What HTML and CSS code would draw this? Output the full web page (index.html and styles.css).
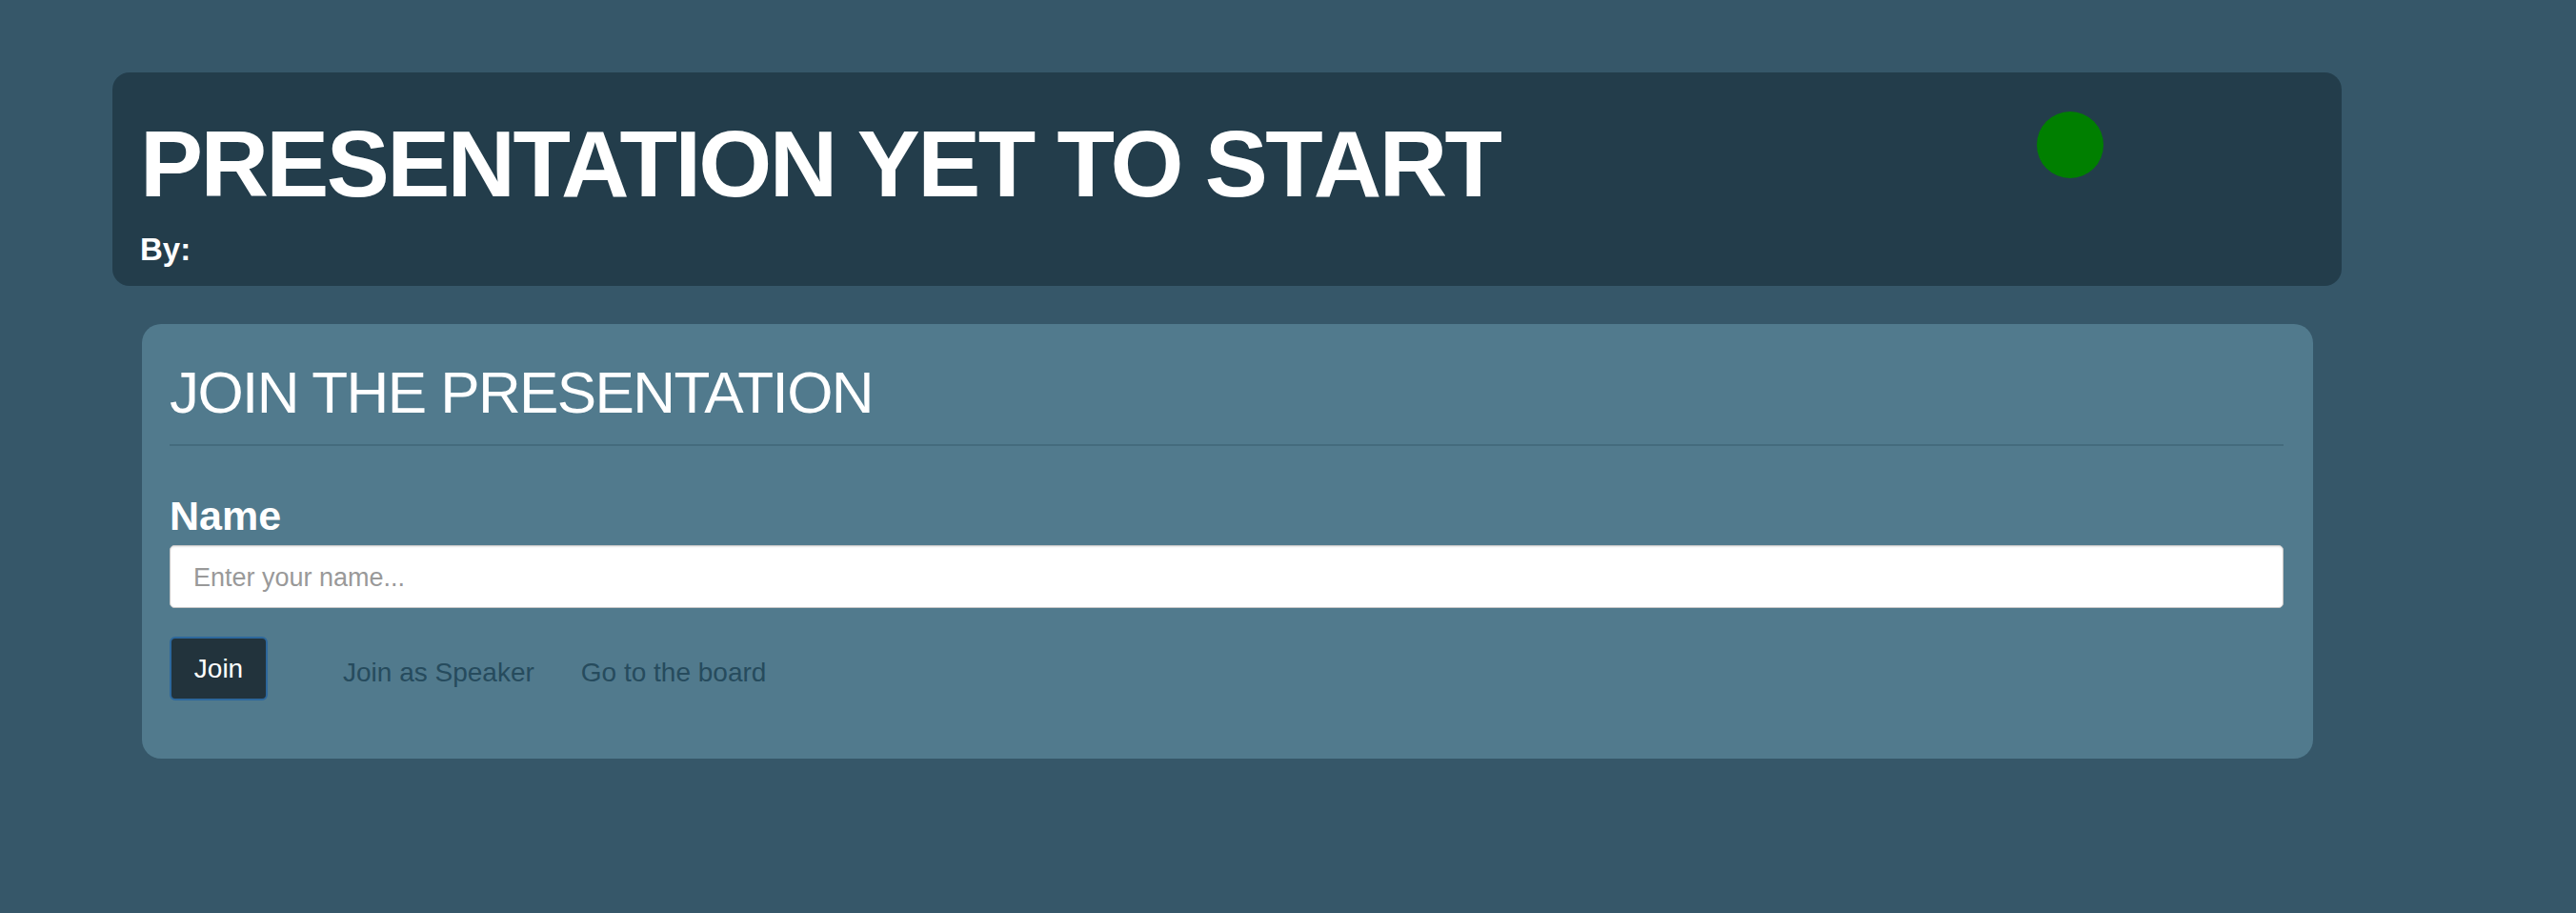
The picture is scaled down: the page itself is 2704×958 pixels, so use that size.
FILE: index.html
```html
<!DOCTYPE html>
<html lang="en">
<head>
<meta charset="utf-8">
<title>Presentation</title>
<link rel="stylesheet" href="styles.css">
</head>
<body>
  <header class="header">
    <div class="header-text">
      <h1 class="title">PRESENTATION YET TO START</h1>
      <div class="byline">By:</div>
    </div>
    <span class="status-dot" aria-label="online"></span>
  </header>

  <section class="card">
    <h2 class="card-title">JOIN THE PRESENTATION</h2>
    <form class="join-form">
      <label class="label" for="name">Name</label>
      <input class="input" id="name" type="text" placeholder="Enter your name...">
      <div class="actions">
        <button class="btn" type="button">Join</button>
        <a class="link link-first" href="#">Join as Speaker</a>
        <a class="link" href="#">Go to the board</a>
      </div>
    </form>
  </section>
</body>
</html>
```

FILE: styles.css
```css
html, body {
  margin: 0;
  padding: 0;
}

body {
  background: #365769;
  font-family: "Liberation Sans", Arial, Helvetica, sans-serif;
  color: #ffffff;
  min-height: 958px;
}

.header {
  box-sizing: border-box;
  width: 2340px;
  height: 224px;
  margin: 76px 0 0 118px;
  padding: 41px 36px 20px 29px;
  background: #233d4b;
  border-radius: 18px;
  display: flex;
  align-items: flex-start;
}

.header-text {
  flex: 1;
}

.title {
  margin: 0;
  font-size: 99px;
  line-height: 110px;
  font-weight: 700;
  letter-spacing: -2.6px;
}

.byline {
  margin-top: 16px;
  font-size: 33px;
  line-height: 37px;
  font-weight: 700;
}

.status-dot {
  width: 70px;
  height: 70px;
  border-radius: 50%;
  background: #007f00;
  margin-right: 214px;
  flex: none;
}

.card {
  box-sizing: border-box;
  width: 2279px;
  margin: 40px 0 0 149px;
  padding: 38px 31px 61px 29px;
  background: #517a8d;
  border-radius: 20px;
}

.card-title {
  margin: 0;
  padding-bottom: 20px;
  border-bottom: 2px solid #446b7d;
  font-size: 62px;
  line-height: 68px;
  font-weight: 400;
  letter-spacing: -1.6px;
}

.join-form {
  display: flex;
  flex-direction: column;
}

.label {
  margin-top: 50px;
  font-size: 43px;
  line-height: 46px;
  font-weight: 700;
}

.input {
  box-sizing: border-box;
  margin-top: 8px;
  width: 100%;
  height: 66px;
  padding: 2px 24px 0;
  border: 1px solid #c8c8c8;
  border-radius: 5px;
  background: #ffffff;
  box-shadow: inset 0 1px 2px rgba(0, 0, 0, 0.1);
  font-family: inherit;
  font-size: 27px;
  color: #333333;
  outline: none;
}

.input::placeholder {
  color: #999999;
}

.actions {
  margin-top: 30px;
  display: flex;
  align-items: center;
}

.btn {
  box-sizing: border-box;
  width: 103px;
  height: 67px;
  padding: 0;
  border: 2px solid #2d679b;
  border-radius: 6px;
  background: #22333c;
  color: #ffffff;
  font-family: inherit;
  font-size: 28px;
}

.link {
  padding-top: 9px;
  font-size: 28px;
  line-height: 32px;
  color: #264b5d;
  text-decoration: none;
  margin-left: 49px;
}

.link-first {
  margin-left: 79px;
}
```
